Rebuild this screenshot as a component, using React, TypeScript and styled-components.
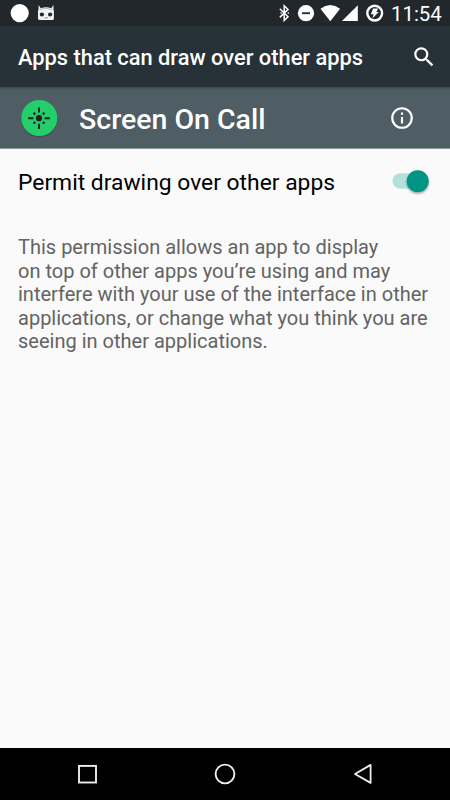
import React from 'react';
import styled, { createGlobalStyle } from 'styled-components';

const GlobalStyle = createGlobalStyle`
  * { box-sizing: border-box; }
  body { margin: 0; background: #fafafa; font-family: Roboto, sans-serif; }
`;

const Screen = styled.div`
  width: 450px;
  height: 800px;
  display: flex;
  flex-direction: column;
  overflow: hidden;
  background: #fafafa;
`;

const StatusBar = styled.header`
  height: 26px;
  flex: none;
  display: flex;
  justify-content: space-between;
  background: #21272b;
  color: #fff;
`;

const StatusIcons = styled.svg`
  display: block;
  height: 26px;
  flex: none;
`;

const StatusGroup = styled.div`
  display: flex;
`;

const Clock = styled.time`
  width: 60px;
  padding-left: 1px;
  font-size: 20.4px;
  line-height: 29px;
  white-space: nowrap;
`;

const Toolbar = styled.div`
  height: 61px;
  flex: none;
  display: flex;
  align-items: center;
  justify-content: space-between;
  padding: 0 13px 0 18px;
  background: #263238;
  color: #fff;
`;

const Title = styled.h1`
  margin: 2px 0 0;
  font-size: 21.83px;
  font-weight: 500;
  line-height: 26px;
  white-space: nowrap;
`;

const IconSvg = styled.svg<{ $size: number }>`
  display: block;
  flex: none;
  width: ${(p) => p.$size}px;
  height: ${(p) => p.$size}px;
`;

const AppHeader = styled.section`
  height: 62px;
  flex: none;
  display: flex;
  align-items: center;
  padding: 0 35px 0 17px;
  background: linear-gradient(#3c484e 0, #4a585f 2px, #4f5d64 5px, #4f5d64 61px, #8c9599 61px);
  color: #fff;
`;

const AppName = styled.h2`
  flex: 1;
  margin: 4px 0 0 18px;
  font-size: 28.5px;
  font-weight: 500;
  line-height: 34px;
  white-space: nowrap;
`;

const Content = styled.main`
  flex: 1;
  padding: 0 0 0 18px;
`;

const PreferenceRow = styled.div`
  height: 66px;
  display: flex;
  align-items: center;
  justify-content: space-between;
  padding-right: 17px;
`;

const PreferenceLabel = styled.span`
  margin-top: 2px;
  font-size: 22.85px;
  line-height: 28px;
  color: #000;
  white-space: nowrap;
`;

const Toggle = styled.button`
  width: 42px;
  height: 34px;
  padding: 0;
  border: 0;
  background: transparent;
`;

const Description = styled.p`
  margin: 21px 0 0;
  font-size: 20.03px;
  line-height: 23.5px;
  color: #636363;
  white-space: nowrap;
`;

const NavigationBar = styled.nav`
  height: 52px;
  flex: none;
  display: flex;
  align-items: center;
  justify-content: center;
  gap: 114px;
  background: #000;
`;

const lines = [
  'This permission allows an app to display',
  'on top of other apps you’re using and may',
  'interfere with your use of the interface in other',
  'applications, or change what you think you are',
  'seeing in other applications.',
];

export default function App() {
  return (
    <>
      <GlobalStyle />
      <Screen>
        <StatusBar>
          <StatusIcons width="60" viewBox="0 0 60 26">
            <circle cx="19.7" cy="13.1" r="9.1" fill="#fff" />
            <path d="M38.6 5l2.2 3.2Q46 6.2 51.2 8.2L53.4 5l.1 4.6.4 1.4v7.4q0 1.6-1.7 1.6H39.8q-1.8 0-1.8-1.6V11l.5-1.4z" fill="#f2f2f2" />
            <path d="M39.5 9.6Q46 7 52.5 9.6" stroke="#a6a9ab" strokeWidth=".8" fill="none" />
            <circle cx="41.9" cy="14.5" r="2.1" fill="#21272b" />
            <circle cx="50.1" cy="14.5" r="2.1" fill="#21272b" />
            <path d="M44.4 17.8h3.4" stroke="#777" strokeWidth=".8" />
          </StatusIcons>
          <StatusGroup>
            <StatusIcons width="120" viewBox="270 0 120 26">
              <path d="M279.8 8.8l8.2 8-3.8 3.6V5.8l3.8 3.6-8.2 8" fill="none" stroke="#fff" strokeWidth="1.5" />
              <path d="M281 13h.1M288.3 13h.1" stroke="#fff" strokeWidth="1.6" strokeLinecap="round" />
              <circle cx="306" cy="13.2" r="8.1" fill="#fff" />
              <path d="M302 13.2h8" stroke="#21272b" strokeWidth="1.8" />
              <path d="M320.5 8.7Q330.3 1.5 340.1 8.7L330.3 21.2z" fill="#fff" />
              <path d="M357.8 5.2V21H342z" fill="#fff" />
              <circle cx="374.7" cy="13.1" r="7.4" fill="none" stroke="#fff" strokeWidth="2.4" />
              <path d="M373.1 8.4h5l-1.7 3.5h2.4l-6.5 6.5 1.4-4.1h-2.8z" fill="#fff" />
            </StatusIcons>
            <Clock>11:54</Clock>
          </StatusGroup>
        </StatusBar>
        <Toolbar>
          <Title>Apps that can draw over other apps</Title>
          <IconSvg $size={26} viewBox="0 0 24 24" aria-label="Search">
            <path fill="#fff" d="M15.5 14h-.79l-.28-.27A6.47 6.47 0 0 0 16 9.5 6.5 6.5 0 1 0 9.5 16c1.61 0 3.09-.59 4.23-1.57l.27.28v.79l5 4.99L20.49 19zm-6 0a4.5 4.5 0 1 1 0-9 4.5 4.5 0 0 1 0 9z" />
          </IconSvg>
        </Toolbar>
        <AppHeader>
          <IconSvg $size={44} viewBox="17 96 44 44">
            <circle cx="39.3" cy="119.3" r="18.2" fill="#384348" opacity=".45" />
            <circle cx="39.3" cy="118" r="18" fill="#23ce6b" />
            <circle cx="39" cy="118.2" r="3.1" fill="#242124" />
            <path d="M39 107.4v5.2M39 123.8v5.2M28.2 118.2h5.2M44.6 118.2h5.2" stroke="#101e15" strokeWidth="1.9" />
            <path d="M33.6 112.8l1.6 1.6M42.8 122l1.6 1.6M44.4 112.8l-1.6 1.6M35.2 122l-1.6 1.6" stroke="#101e15" strokeWidth="2.1" />
          </IconSvg>
          <AppName>Screen On Call</AppName>
          <IconSvg $size={26} viewBox="0 0 24 24" aria-label="App info">
            <path fill="#fff" d="M11 17h2v-6h-2zm1-15a10 10 0 1 0 0 20 10 10 0 0 0 0-20zm0 18a8 8 0 1 1 0-16 8 8 0 0 1 0 16zM11 9h2V7h-2z" />
          </IconSvg>
        </AppHeader>
        <Content>
          <PreferenceRow>
            <PreferenceLabel>Permit drawing over other apps</PreferenceLabel>
            <Toggle role="switch" aria-checked="true" aria-label="Permit drawing over other apps">
              <svg width="42" height="34" viewBox="391 165 42 34">
                <defs>
                  <filter id="thumbShadow" x="-30%" y="-30%" width="160%" height="170%">
                    <feDropShadow dx="0" dy="1.3" stdDeviation="1" floodOpacity=".4" />
                  </filter>
                </defs>
                <rect x="392.5" y="173.2" width="34" height="15.6" rx="7.8" fill="#b5dfda" />
                <circle cx="417.7" cy="181.2" r="11" fill="#009485" filter="url(#thumbShadow)" />
              </svg>
            </Toggle>
          </PreferenceRow>
          <Description>
            {lines.map((line) => (
              <React.Fragment key={line}>
                {line}
                <br />
              </React.Fragment>
            ))}
          </Description>
        </Content>
        <NavigationBar>
          <IconSvg $size={24} viewBox="0 0 24 24">
            <rect x="4" y="3.9" width="17" height="16.6" fill="none" stroke="#eee" strokeWidth="1.9" />
          </IconSvg>
          <IconSvg $size={24} viewBox="0 0 24 24">
            <circle cx="12" cy="12" r="9.4" fill="none" stroke="#eee" strokeWidth="1.9" />
          </IconSvg>
          <IconSvg $size={24} viewBox="0 0 24 24">
            <path d="M19.6 2.9v18L4 12z" fill="none" stroke="#eee" strokeWidth="1.8" strokeLinejoin="round" />
          </IconSvg>
        </NavigationBar>
      </Screen>
    </>
  );
}
